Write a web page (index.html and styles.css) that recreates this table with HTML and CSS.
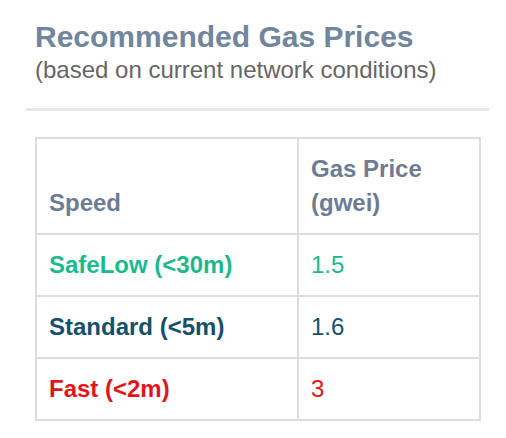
FILE: index.html
```html
<!DOCTYPE html>
<html>
<head>
<meta charset="utf-8">
<link rel="stylesheet" href="styles.css">
</head>
<body>
<div class="wrap">
  <div class="heading">
    <h3 class="title">Recommended Gas Prices</h3>
    <p class="subtitle">(based on current network conditions)</p>
  </div>
  <div class="rule"></div>
  <table class="prices">
    <thead>
      <tr><th class="col-speed">Speed</th><th>Gas Price<br>(gwei)</th></tr>
    </thead>
    <tbody>
      <tr class="safelow"><td class="label">SafeLow (&lt;30m)</td><td>1.5</td></tr>
      <tr class="standard"><td class="label">Standard (&lt;5m)</td><td>1.6</td></tr>
      <tr class="fast"><td class="label">Fast (&lt;2m)</td><td>3</td></tr>
    </tbody>
  </table>
</div>
</body>
</html>
```

FILE: styles.css
```css
html, body {
  margin: 0;
  padding: 0;
  background: #ffffff;
}
body {
  font-family: "Liberation Sans", Arial, sans-serif;
}
.wrap {
  margin: 0 17px 0 26px;
}
.heading {
  padding: 20px 0 0 9px;
}
.title {
  margin: 0;
  font-size: 30px;
  line-height: 33px;
  font-weight: bold;
  color: #71859c;
}
.subtitle {
  margin: 0;
  font-size: 24px;
  line-height: 34px;
  color: #666666;
}
.rule {
  margin-top: 21px;
  height: 3px;
  background: #e4e8ed;
}
.prices {
  margin: 26px 0 0 9px;
  width: 446px;
  border-collapse: collapse;
  border: 2px solid #dddddd;
  font-size: 24px;
  line-height: 34px;
}
.prices th,
.prices td {
  border: 2px solid #dddddd;
  padding: 13px 12px;
  text-align: left;
}
.prices th {
  vertical-align: bottom;
  font-weight: bold;
  color: #6c7d93;
}
.prices td {
  vertical-align: top;
}
.col-speed {
  width: 236px;
}
.label {
  font-weight: bold;
}
.safelow td { color: #1db98d; }
.standard td { color: #15516a; }
.fast td { color: #e3141c; }
```
